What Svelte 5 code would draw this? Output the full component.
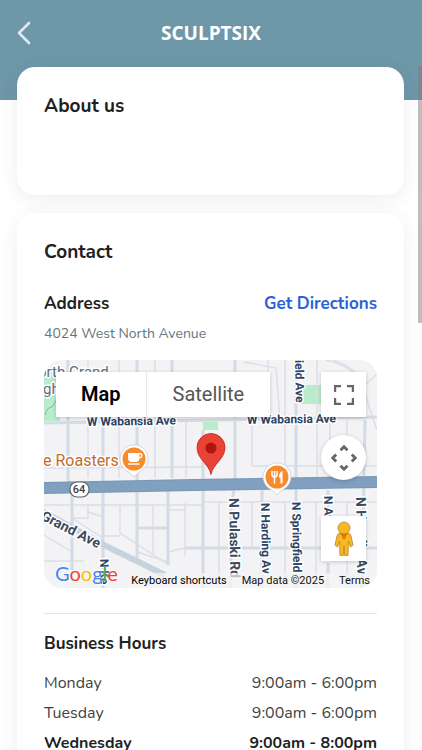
<script lang="ts">
	const address = '4024 West North Avenue';

	const hours = [
		{ day: 'Monday', time: '9:00am - 6:00pm', today: false },
		{ day: 'Tuesday', time: '9:00am - 6:00pm', today: false },
		{ day: 'Wednesday', time: '9:00am - 8:00pm', today: true }
	];

	// label position and rotation on the map canvas
	const streets = [
		{ name: 'W Wabansia Ave', x: 43, y: 66, angle: -1 },
		{ name: 'W Wabansia Ave', x: 203, y: 64, angle: -1 },
		{ name: 'N Harding Av', x: 217, y: 143, angle: 89 },
		{ name: 'N Springfield', x: 248, y: 142, angle: 89 },
		{ name: 'N Avers Ave', x: 280, y: 136, angle: 89 },
		{ name: 'ield Ave', x: 251, y: 0, angle: 89 },
		{ name: 'N Ke', x: 56, y: 199, angle: 89 }
	];

	const thinRoads = [
		'M44 0V118M75 0V118M111 0V118M142 60V118',
		'M208 60V106M224 0V60M241 0V118M273 0V118M286 60V118M303 60V118',
		'M0 108L159 107M208 106H333M0 145H159M159 142H333',
		'M28 158H44V145M76 145V173L125 205M109 145V168M109 168V195M44 152L59 157M59 176H76',
		'M28 158L59 178M0 175L28 192V210M0 201H40M93 192L124 202M124 150H141V196M141 145V182M124 192L141 188M141 143V150',
		'M175 142V228M208 142V188M241 142V228M272 142V228M303 142V228',
		'M200 2L232 8L236 60M282 0Q306 5 318 22Q324 45 333 70M290 0Q312 8 322 24L333 14'
	];

	const wideRoads = [
		'M24 0V118L28 130V210M59 62V228M93 0V200M128 0V118M124 130V205M159 70V228',
		'M191 0V118Q191 128 187 145V228M218 130V228M252 0V228M284 130V228M321 60L318 228',
		'M0 63L333 57M93 168H124M141 188H333'
	];

	let mapType = $state('Map');
</script>

<div class="screen">
	<header class="topbar">
		<button type="button" class="back" aria-label="Back">
			<svg viewBox="0 0 16 26" width="16" height="26" aria-hidden="true">
				<path d="M13 3 3 13l10 10" fill="none" stroke="#dcebf2" stroke-width="2.6" stroke-linecap="round" stroke-linejoin="round" />
			</svg>
		</button>
		<h1>SCULPTSIX</h1>
	</header>

	<main>
		<section class="card about">
			<h2>About us</h2>
		</section>

		<section class="card">
			<h2>Contact</h2>

			<div class="row address-head">
				<h3>Address</h3>
				<a href="#directions">Get Directions</a>
			</div>
			<p class="address">{address}</p>

			<div class="map">
				<svg class="canvas" viewBox="0 0 333 228" preserveAspectRatio="xMidYMid slice" aria-hidden="true">
					<rect width="333" height="228" fill="#f3f2f5" />
					<g fill="#b9eccb">
						<path d="M0 9H14L16 61H0Z" />
						<path d="M159 62H174V70H159Z" />
						<path d="M259 25H281V44H257Z" />
					</g>
					<path d="M1 55Q3 47 8 47L15 36" fill="none" stroke="#78bf99" />
					<g fill="none" stroke="#d9dfe6" stroke-width="1.4">
						{#each thinRoads as d}
							<path {d} />
						{/each}
					</g>
					<g fill="none" stroke="#d3dce4" stroke-width="3">
						{#each wideRoads as d}
							<path {d} />
						{/each}
					</g>
					<path d="M-4 150L60 185L121 215" fill="none" stroke="#c7d3dc" stroke-width="6" />
					<path d="M0 128L150 125L333 122" fill="none" stroke="#7898b8" stroke-width="12" />
					<path d="M0 128L150 125L333 122" fill="none" stroke="#819fbe" stroke-width="10" />

					<g class="labels">
						<text class="area" x="-6" y="17">orth Grand</text>
						<text class="area" x="-1" y="34">ghts</text>
						{#each streets as street}
							<text class="street" transform="translate({street.x} {street.y}) rotate({street.angle})">{street.name}</text>
						{/each}
						<text class="avenue" transform="translate(-4 159) rotate(27)">Grand Ave</text>
						<text class="avenue" transform="translate(185 138) rotate(89)">N Pulaski Rd</text>
						<text class="avenue" transform="translate(312 137) rotate(89)">N Hamlin Av</text>
						<text class="cafe" x="-1" y="106">e Roasters</text>
					</g>

					<rect x="26" y="122" width="19" height="15" rx="7" fill="#fff" stroke="#59636c" stroke-width="1.2" />
					<text class="route" x="35" y="133">64</text>

					<!-- cafe pin -->
					<path d="M90 117Q87 113 83 111A14 14 0 1 1 97 111Q93 113 90 117Z" fill="#fff" stroke="#bcc1c6" stroke-width="0.6" />
					<circle cx="90" cy="99" r="11.5" fill="#f98b2f" />
					<path d="M84 93H96.5Q98.5 93 98.5 95.5T95.5 98.5Q95 102 91.5 102H88Q84 102 84 98Z" fill="#fff" />
					<path d="M95.5 94.5V97Q97.3 97 97.3 95.7T95.5 94.5Z" fill="#f98b2f" />
					<path d="M84 104H95.5" stroke="#fff" stroke-width="1.3" />

					<!-- restaurant pin -->
					<path d="M233 135Q230 131 226 129A14 14 0 1 1 240 129Q236 131 233 135Z" fill="#fff" stroke="#bcc1c6" stroke-width="0.6" />
					<circle cx="233" cy="117" r="11.5" fill="#f98b2f" />
					<path d="M228 111V114.5Q228 117 230.5 117T233 114.5V111M230.5 111V123.5" fill="none" stroke="#fff" stroke-width="1.5" />
					<path d="M238.5 111Q235 112 235 117.5H236.5V123.5H238.5Z" fill="#fff" />

					<!-- location marker -->
					<path d="M167 114.5C165 104 153 99 153 87.5A14 14 0 0 1 181 87.5C181 99 169 104 167 114.5Z" fill="#e94335" stroke="#c5221f" stroke-width="0.8" />
					<circle cx="167" cy="88" r="5.5" fill="#b31412" />
				</svg>

				<div class="map-types">
					{#each ['Map', 'Satellite'] as type}
						<button type="button" class:active={mapType === type} onclick={() => (mapType = type)}>{type}</button>
					{/each}
				</div>

				<button type="button" class="control fullscreen" aria-label="Toggle fullscreen view">
					<svg viewBox="0 0 20 20" width="20" height="20" aria-hidden="true">
						<path d="M1 7V1H7M13 1H19V7M19 13V19H13M7 19H1V13" fill="none" stroke="#666" stroke-width="2.4" />
					</svg>
				</button>

				<button type="button" class="control camera" aria-label="Map camera controls">
					<svg viewBox="0 0 26 26" width="26" height="26" aria-hidden="true">
						<path d="M9.5 5.2 13 1.7 16.5 5.2M9.5 20.8 13 24.3 16.5 20.8M5.2 9.5 1.7 13 5.2 16.5M20.8 9.5 24.3 13 20.8 16.5" fill="none" stroke="#666" stroke-width="2.8" />
					</svg>
				</button>

				<button type="button" class="control pegman" aria-label="Street View">
					<svg viewBox="0 0 20 36" width="20" height="36" aria-hidden="true">
						<path d="M6 12H14Q16 12 17 15L19 24 16.5 26 14.5 20 14 34.5H10.7L10 25 9.3 34.5H6L5.5 20 3.5 26 1 24 3 15Q4 12 6 12Z" fill="#f9b625" stroke="#b5871f" stroke-width="0.8" />
						<path d="M6 12H14L10 19Z" fill="#e37400" />
						<circle cx="10" cy="7" r="6" fill="#f9b625" stroke="#a98632" stroke-width="0.8" />
					</svg>
				</button>

				<span class="google"><i>G</i><i>o</i><i>o</i><i>g</i><i>l</i><i>e</i></span>

				<div class="legal">
					<button type="button">Keyboard shortcuts</button>
					<span>Map data ©2025</span>
					<a href="#terms">Terms</a>
				</div>
			</div>

			<hr />

			<h3>Business Hours</h3>
			<dl>
				{#each hours as entry}
					<div class="row" class:today={entry.today}>
						<dt>{entry.day}</dt>
						<dd>{entry.time}</dd>
					</div>
				{/each}
			</dl>
		</section>
	</main>

	<div class="scroll-thumb"></div>
</div>

<style>
	:global(body) {
		margin: 0;
		background: #fff;
		color: #212121;
		font-family: Nunito, 'Open Sans', sans-serif;
	}

	h1,
	h2,
	h3,
	p,
	dl,
	dd {
		margin: 0;
	}

	button {
		padding: 0;
		border: 0;
		background: none;
		font: inherit;
		cursor: pointer;
	}

	a {
		text-decoration: none;
	}

	.screen {
		position: relative;
		height: 100vh;
		overflow: hidden;
	}

	.topbar {
		display: grid;
		grid-template-columns: 16px 1fr 16px;
		align-items: center;
		padding: 20px 16px 54px;
		background: #6e97a8;
	}

	.back {
		height: 26px;
	}

	h1 {
		color: #fff;
		font-family: 'Open Sans', sans-serif;
		font-size: 19px;
		line-height: 26px;
		text-align: center;
	}

	main {
		display: grid;
		gap: 18px;
		margin-top: -33px;
		padding: 0 18px 18px 17px;
	}

	.card {
		min-width: 0;
		padding: 27px;
		border-radius: 18px;
		background: #fff;
		box-shadow: 0 4px 18px rgba(70, 70, 110, 0.09);
	}

	.about {
		padding-bottom: 77px;
	}

	h2 {
		font-size: 19px;
		font-weight: 700;
		line-height: 24px;
	}

	h3,
	.address-head a {
		font-size: 17px;
		font-weight: 700;
		line-height: 24px;
	}

	.row {
		display: flex;
		justify-content: space-between;
	}

	.address-head {
		margin-top: 28px;
	}

	.address-head a {
		color: #2962d9;
	}

	.address {
		margin-top: 8px;
		color: #667582;
		font-size: 14px;
		line-height: 20px;
	}

	.map {
		position: relative;
		height: 228px;
		margin-top: 16px;
		border-radius: 18px;
		overflow: hidden;
		font-family: Roboto, sans-serif;
	}

	.canvas {
		display: block;
		width: 100%;
		height: 100%;
	}

	.labels text {
		paint-order: stroke;
		stroke: #fff;
		stroke-width: 3px;
		stroke-linejoin: round;
	}

	.labels .area {
		fill: #5c6f80;
		font-size: 15px;
	}

	.labels .street {
		fill: #2c4364;
		font-size: 12px;
		font-weight: 700;
	}

	.labels .avenue {
		fill: #3c4c60;
		font-size: 14px;
		font-weight: 700;
	}

	.labels .cafe {
		fill: #c66a27;
		font-size: 16px;
	}

	.route {
		fill: #3c4043;
		font-size: 11px;
		font-weight: 500;
		text-anchor: middle;
	}

	.map-types {
		position: absolute;
		top: 12px;
		left: 12px;
		display: flex;
		background: #fff;
		box-shadow: 0 1px 4px rgba(0, 0, 0, 0.2);
	}

	.map-types button {
		padding: 0 26px;
		color: #565656;
		font-size: 20px;
		line-height: 45px;
	}

	.map-types button + button {
		border-left: 1px solid #e8e8e8;
	}

	.map-types .active {
		padding: 0 25px;
		color: #000;
		font-weight: 600;
	}

	.control {
		position: absolute;
		right: 11px;
		display: grid;
		place-items: center;
		width: 45px;
		height: 45px;
		background: #fff;
		box-shadow: 0 1px 4px rgba(0, 0, 0, 0.2);
	}

	.fullscreen {
		top: 12px;
	}

	.camera {
		top: 75px;
		border-radius: 50%;
	}

	.pegman {
		bottom: 27px;
	}

	.google {
		position: absolute;
		bottom: 3px;
		left: 11px;
		font-family: Lato, sans-serif;
		font-size: 20px;
		line-height: 24px;
		text-shadow: 0 0 2px #fff;
	}

	.google i {
		color: #4285f4;
		font-style: normal;
	}

	.google i:nth-child(2),
	.google i:nth-child(6) {
		color: #ea4335;
	}

	.google i:nth-child(3) {
		color: #fbbc04;
	}

	.google i:nth-child(5) {
		color: #34a853;
	}

	.legal {
		position: absolute;
		right: 0;
		bottom: 0;
		display: flex;
		gap: 15px;
		padding: 0 7px 0 3px;
		background: rgba(245, 245, 245, 0.7);
		color: #111;
		font-size: 11px;
		line-height: 15px;
	}

	.legal a {
		color: inherit;
	}

	hr {
		height: 1px;
		margin: 25px 0 18px;
		border: 0;
		background: #e2e4e6;
	}

	dl {
		margin-top: 12px;
		color: #424242;
		font-size: 16px;
		line-height: 30px;
	}

	.today {
		color: #212121;
		font-weight: 700;
	}

	.scroll-thumb {
		position: absolute;
		top: 66px;
		right: 0;
		width: 4px;
		height: 257px;
		background: rgba(125, 125, 125, 0.5);
	}
</style>
